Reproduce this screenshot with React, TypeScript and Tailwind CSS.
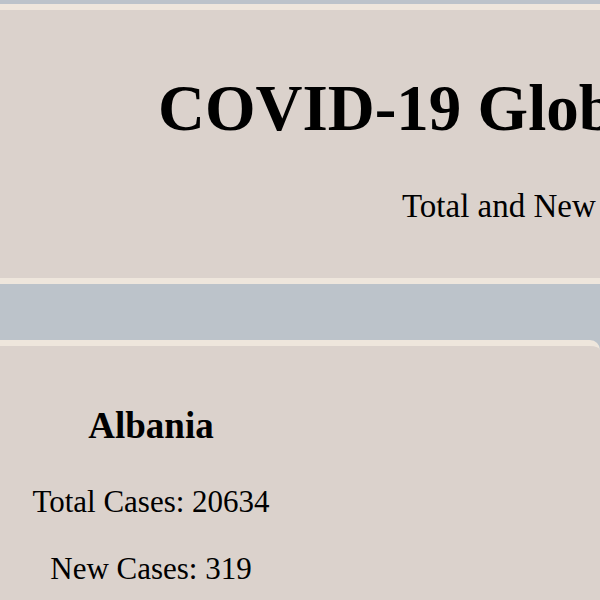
import React from "react";

export default function App() {
  return (
    <div
      className="min-h-screen w-[600px] overflow-hidden bg-[#bcc3ca] pt-[4px] text-black"
      style={{ fontFamily: '"Liberation Serif", "Times New Roman", serif' }}
    >
      <header className="h-[280px] border-y-[6px] border-[#eee6dc] bg-[#dbd2cc] pt-[66px]">
        <h1 className="whitespace-nowrap pl-[158px] text-[65px] font-bold leading-none">
          COVID-19 Global Statistics
        </h1>
        <p className="mt-[49px] whitespace-nowrap pl-[402px] text-[33px] leading-none">
          Total and New Cases by Country
        </p>
      </header>

      <section className="mt-[56px] min-h-[260px] rounded-tr-[10px] border-t-[6px] border-[#eee6dc] bg-[#dbd2cc]">
        <div className="flex w-[302px] flex-col items-center pt-[61px] text-center">
          <h2 className="whitespace-nowrap text-[37px] font-bold leading-none">Albania</h2>
          <p className="mt-[42px] whitespace-nowrap text-[31px] leading-none">Total Cases: 20634</p>
          <p className="mt-[36px] whitespace-nowrap text-[31px] leading-none">New Cases: 319</p>
        </div>
      </section>
    </div>
  );
}
